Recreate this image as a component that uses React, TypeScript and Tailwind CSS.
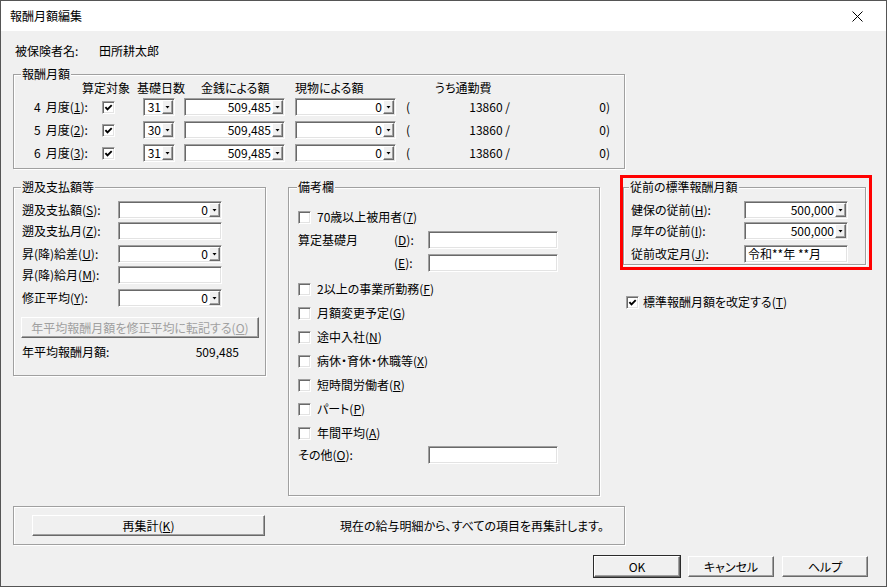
import type { ReactNode } from 'react'

const sunken =
  'bg-white border border-t-[#a0a0a0] border-l-[#a0a0a0] border-r-white border-b-white shadow-[inset_1px_1px_0_#696969,inset_-1px_-1px_0_#e3e3e3]'

const raised =
  'bg-[#f0f0f0] border border-t-white border-l-white border-r-[#696969] border-b-[#696969] shadow-[inset_-1px_-1px_0_#a0a0a0]'

// mnemonic letter with underline
const U = ({ c }: { c: string }) => <span className="underline underline-offset-[1px]">{c}</span>

const DropBtn = () => (
  <span className={`flex h-[14px] w-[11px] shrink-0 items-center justify-center ${raised}`}>
    <svg width="5" height="3" viewBox="0 0 5 3">
      <path d="M0.5 0h4L2.5 2.5z" fill="#000" />
    </svg>
  </span>
)

const Combo = ({ className, value }: { className: string; value: string }) => (
  <div className={`flex h-[18px] items-center pr-[1px] ${sunken} ${className}`}>
    <span className="flex-1 pr-[1px] text-right">{value}</span>
    <DropBtn />
  </div>
)

const Edit = ({ className, value }: { className: string; value?: string }) => (
  <div className={`flex h-[18px] items-center pl-[3px] ${sunken} ${className}`}>{value}</div>
)

const Check = ({ checked }: { checked?: boolean }) => (
  <span className={`flex h-[13px] w-[13px] shrink-0 items-center justify-center ${sunken}`}>
    {checked && (
      <svg width="9" height="9" viewBox="0 0 9 9">
        <path d="M1.4 4.2 3.5 6.4 7.7 2.2" fill="none" stroke="#000" strokeWidth="1.9" />
      </svg>
    )}
  </span>
)

const Group = ({
  label,
  labelPos = 'left-[7px]',
  className,
  children,
}: {
  label?: string
  labelPos?: string
  className: string
  children: ReactNode
}) => (
  <div className={`relative border border-[#a0a0a0] shadow-[inset_1px_1px_0_#fff,1px_1px_0_#fff] ${className}`}>
    {label && (
      <span className={`absolute -top-[9px] bg-[#f0f0f0] px-[1px] leading-[16px] ${labelPos}`}>{label}</span>
    )}
    {children}
  </div>
)

const Btn = ({
  className,
  children,
  isDefault,
  disabled,
}: {
  className: string
  children: ReactNode
  isDefault?: boolean
  disabled?: boolean
}) => (
  <div
    className={`flex h-[21px] items-center justify-center ${raised} ${isDefault ? 'ring-1 ring-[#2b2b2b]' : ''} ${
      disabled ? 'text-[#a0a0a0]' : ''
    } ${className}`}
  >
    {children}
  </div>
)

const CheckRow = ({ className = '', children, checked }: { className?: string; children: ReactNode; checked?: boolean }) => (
  <div className={`flex h-[16px] items-center ${className}`}>
    <Check checked={checked} />
    <span className="ml-[6px]">{children}</span>
  </div>
)

const months = [
  { m: '4', n: '1', d: '31' },
  { m: '5', n: '2', d: '30' },
  { m: '6', n: '3', d: '31' },
]

export default function App() {
  return (
    <div className="flex h-[587px] w-[887px] flex-col border border-[#555] bg-[#f0f0f0] font-['Noto_Sans_CJK_JP','Noto_Sans',sans-serif] text-[12px] leading-[16px] text-black [font-feature-settings:'palt']">
      {/* Title bar */}
      <div className="flex h-[30px] shrink-0 items-center justify-between bg-white pl-[9px] pr-[23px]">
        <span>報酬月額編集</span>
        <svg width="11" height="11" viewBox="0 0 11 11">
          <path d="M0.5 0.5l10 10M10.5 0.5l-10 10" stroke="#000" strokeWidth="1" />
        </svg>
      </div>

      <div className="flex-1 pl-[12px]">
        {/* 被保険者名 */}
        <div className="mt-[12px] flex pl-[2px]">
          <span className="w-[84px]">被保険者名:</span>
          <span>田所耕太郎</span>
        </div>

        {/* 報酬月額 */}
        <Group label="報酬月額" className="mt-[15px] h-[95px] w-[612px]">
          <div className="mt-[5px] flex pl-[68px]">
            <span className="w-[55px]">算定対象</span>
            <span className="w-[64px]">基礎日数</span>
            <span className="w-[94px]">金銭による額</span>
            <span className="w-[140px]">現物による額</span>
            <span>うち通勤費</span>
          </div>
          <div className="mt-[2px] flex flex-col gap-[5px]">
            {months.map((r) => (
              <div key={r.m} className="flex h-[18px] items-center">
                <span className="flex w-[88px] pl-[20px]">
                  <span>{r.m}</span>
                  <span className="ml-[5px]">
                    月度(<U c={r.n} />):
                  </span>
                </span>
                <Check checked />
                <Combo className="ml-[28px] w-[32px]" value={r.d} />
                <Combo className="ml-[9px] w-[101px]" value="509,485" />
                <Combo className="ml-[10px] w-[101px]" value="0" />
                <span className="ml-[10px] w-[14px]">(</span>
                <span className="w-[90px] text-right">13860 /</span>
                <span className="w-[100px] text-right">0)</span>
              </div>
            ))}
          </div>
        </Group>

        <div className="mt-[6px] flex items-start">
          {/* 遡及支払額等 */}
          <Group label="遡及支払額等" className="mt-[12px] h-[189px] w-[253px]">
            <div className="flex flex-col pl-[8px] pt-[13px]">
              <div className="flex h-[18px] items-center">
                <span className="w-[96px]">遡及支払額(<U c="S" />):</span>
                <Combo className="w-[104px]" value="0" />
              </div>
              <div className="mt-[3px] flex h-[18px] items-center">
                <span className="w-[96px]">遡及支払月(<U c="Z" />):</span>
                <Edit className="w-[104px]" />
              </div>
              <div className="mt-[5px] flex h-[18px] items-center">
                <span className="w-[96px]">昇(降)給差(<U c="U" />):</span>
                <Combo className="w-[104px]" value="0" />
              </div>
              <div className="mt-[3px] flex h-[18px] items-center">
                <span className="w-[96px]">昇(降)給月(<U c="M" />):</span>
                <Edit className="w-[104px]" />
              </div>
              <div className="mt-[5px] flex h-[18px] items-center">
                <span className="w-[96px]">修正平均(<U c="Y" />):</span>
                <Combo className="w-[104px]" value="0" />
              </div>
              <Btn disabled className="-ml-[1px] mt-[10px] w-[238px]">
                年平均報酬月額を修正平均に転記する(<U c="O" />)
              </Btn>
              <div className="mt-[6px] flex w-[217px] justify-between">
                <span>年平均報酬月額:</span>
                <span>509,485</span>
              </div>
            </div>
          </Group>

          {/* 備考欄 */}
          <Group label="備考欄" labelPos="left-[8px]" className="ml-[22px] mt-[12px] h-[309px] w-[312px]">
            <div className="flex flex-col pl-[9px] pt-[21px]">
              <CheckRow>
                70歳以上被用者(<U c="7" />)
              </CheckRow>
              <div className="mt-[6px] flex h-[18px] items-center">
                <span className="w-[96px]">算定基礎月</span>
                <span className="w-[34px]">
                  (<U c="D" />):
                </span>
                <Edit className="w-[130px]" />
              </div>
              <div className="mt-[5px] flex h-[18px] items-center">
                <span className="w-[96px]" />
                <span className="w-[34px]">
                  (<U c="E" />):
                </span>
                <Edit className="w-[130px]" />
              </div>
              <CheckRow className="mt-[9px]">
                2以上の事業所勤務(<U c="F" />)
              </CheckRow>
              <CheckRow className="mt-[8px]">
                月額変更予定(<U c="G" />)
              </CheckRow>
              <CheckRow className="mt-[8px]">
                途中入社(<U c="N" />)
              </CheckRow>
              <CheckRow className="mt-[8px]">
                病休・育休・休職等(<U c="X" />)
              </CheckRow>
              <CheckRow className="mt-[8px]">
                短時間労働者(<U c="R" />)
              </CheckRow>
              <CheckRow className="mt-[8px]">
                パート(<U c="P" />)
              </CheckRow>
              <CheckRow className="mt-[8px]">
                年間平均(<U c="A" />)
              </CheckRow>
              <div className="mt-[5px] flex h-[18px] items-center">
                <span className="w-[130px]">
                  その他(<U c="O" />):
                </span>
                <Edit className="w-[130px]" />
              </div>
            </div>
          </Group>

          {/* 従前の標準報酬月額 */}
          <div className="ml-[20px] flex flex-col">
            <div className="h-[95px] w-[252px] border-[3px] border-[#ff0000]">
              <Group label="従前の標準報酬月額" labelPos="left-[5px]" className="mt-[9px] h-[78px] w-[243px]">
                <div className="flex flex-col pl-[7px] pt-[13px]">
                  <div className="flex h-[18px] items-center">
                    <span className="w-[113px]">健保の従前(<U c="H" />):</span>
                    <Combo className="w-[104px]" value="500,000" />
                  </div>
                  <div className="mt-[3px] flex h-[18px] items-center">
                    <span className="w-[113px]">厚年の従前(<U c="I" />):</span>
                    <Combo className="w-[104px]" value="500,000" />
                  </div>
                  <div className="mt-[5px] flex h-[18px] items-center">
                    <span className="w-[113px]">従前改定月(<U c="J" />):</span>
                    <Edit className="w-[104px]" value="令和**年 **月" />
                  </div>
                </div>
              </Group>
            </div>
            <div className="ml-[6px] mt-[24px] flex h-[16px] items-center">
              <Check checked />
              <span className="ml-[4px]">
                標準報酬月額を改定する(<U c="T" />)
              </span>
            </div>
          </div>
        </div>

        {/* 再集計 */}
        <Group className="mt-[10px] flex h-[39px] w-[612px] items-center">
          <Btn className="ml-[18px] w-[233px]">
            再集計(<U c="K" />)
          </Btn>
          <span className="ml-[75px]">現在の給与明細から、すべての項目を再集計します。</span>
        </Group>

        {/* OK / キャンセル / ヘルプ */}
        <div className="mt-[11px] flex justify-end gap-[8px] pr-[18px]">
          <Btn isDefault className="w-[86px]">
            OK
          </Btn>
          <Btn className="w-[86px]">キャンセル</Btn>
          <Btn className="w-[86px]">ヘルプ</Btn>
        </div>
      </div>
    </div>
  )
}
